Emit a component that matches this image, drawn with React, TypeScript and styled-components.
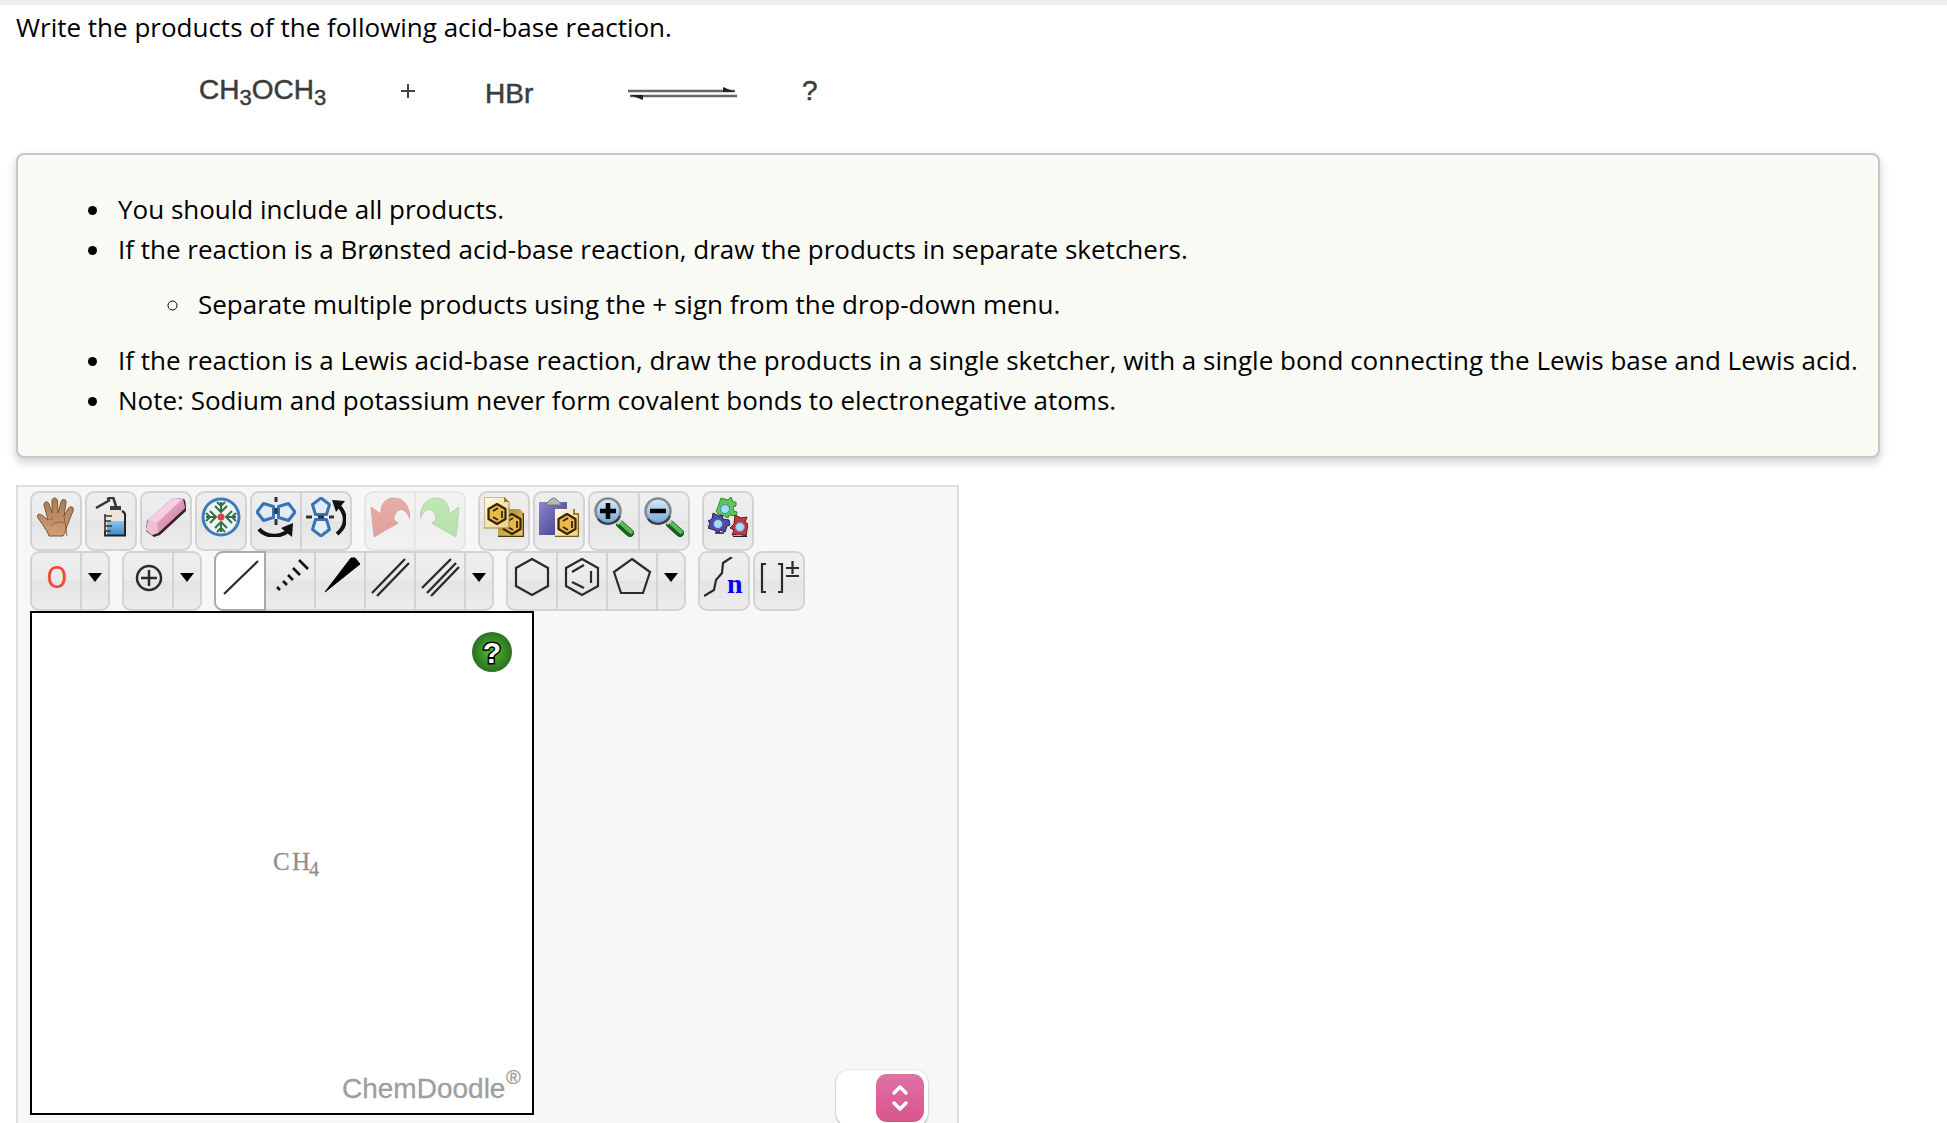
import React from "react";
import styled, { createGlobalStyle, css } from "styled-components";

const GlobalStyle = createGlobalStyle`
  body {
    margin: 0;
    background: #fff;
    color: #000;
    font-family: "Open Sans", "Noto Sans", sans-serif;
    font-size: 26px;
    line-height: 40px;
  }
`;

const Page = styled.main`
  border-top: 5px solid #efefef;
  padding: 2px 16px 16px;
`;

const Prompt = styled.p`
  margin: 0;
`;

const Scheme = styled.svg`
  display: block;
  margin: 13px 0 33px;
  font-family: "Liberation Sans", Arial, sans-serif;
`;

const Hints = styled.section`
  box-sizing: border-box;
  width: fit-content;
  padding: 34px 20px 36px 20px;
  border: 2px solid #c8c8c8;
  border-radius: 8px;
  background: #f9faf4;
  box-shadow: 0 4px 10px rgba(0, 0, 0, 0.2);
`;

const HintList = styled.ul<{ $nested?: boolean }>`
  margin: ${(p) => (p.$nested ? "15px 0 16px" : "0")};
  padding-left: 75px;
  list-style: ${(p) => (p.$nested ? "circle" : "disc")};
`;

const Hint = styled.li`
  padding-left: 5px;
`;

const Panel = styled.section`
  box-sizing: border-box;
  display: flex;
  align-items: flex-end;
  gap: 31px;
  width: fit-content;
  margin-top: 27px;
  padding: 4px 29px 12px 12px;
  border: 2px solid #dedede;
  background: #f7f7f7;
`;

const Sketcher = styled.div`
  padding-bottom: 11px;
`;

const Toolbar = styled.div`
  display: flex;
  gap: 12px;
`;

const Cluster = styled.div`
  display: flex;
  gap: 3px;
`;

const Group = styled.div<{ $disabled?: boolean }>`
  display: flex;
  gap: 2px;
  box-sizing: border-box;
  height: 60px;
  border: 2px solid #d3d3d3;
  border-radius: 9px;
  background: #d3d3d3;
  opacity: ${(p) => (p.$disabled ? 0.45 : 1)};
`;

const ToolButton = styled.button<{ $narrow?: boolean; $active?: boolean }>`
  display: flex;
  justify-content: center;
  box-sizing: border-box;
  width: ${(p) => (p.$narrow ? 26 : 48)}px;
  height: 56px;
  margin: 0;
  padding: 4px 0 12px;
  border: 0;
  background: linear-gradient(#eeeeee, #eaeaea 49%, #e4e4e4 51%, #ededed);
  &:first-child {
    border-top-left-radius: 7px;
    border-bottom-left-radius: 7px;
  }
  &:last-child {
    border-top-right-radius: 7px;
    border-bottom-right-radius: 7px;
  }
  ${(p) =>
    p.$active &&
    css`
      background: #fff;
      box-shadow: 0 0 0 2px #aaa;
    `}
`;

const CanvasFrame = styled.div`
  position: relative;
  box-sizing: border-box;
  width: 504px;
  height: 504px;
  border: 2px solid #000;
  background: #fff;
`;

const HelpButton = styled.button`
  position: absolute;
  top: 19px;
  right: 20px;
  display: flex;
  padding: 0;
  border: 0;
  background: none;
`;

const Picker = styled.label`
  position: relative;
  display: block;
`;

const PickerSelect = styled.select`
  display: block;
  appearance: none;
  width: 92px;
  height: 56px;
  padding: 0 52px 0 12px;
  border: 0;
  border-radius: 13px;
  background: #fff;
  box-shadow: 0 1px 2px rgba(0, 0, 0, 0.3), 0 0 2px rgba(0, 0, 0, 0.15);
  font: 26px "Open Sans", sans-serif;
`;

const PickerKnob = styled.span`
  position: absolute;
  top: 4px;
  right: 4px;
  width: 48px;
  height: 48px;
  border-radius: 11px;
  background: linear-gradient(#de72a5, #da548d);
  pointer-events: none;
`;

const ink = "#2b2b2b";

function Icon({ children, width = 40 }: { children: React.ReactNode; width?: number }) {
  return (
    <svg width={width} height={40} viewBox={`0 0 ${width} 40`} fill="none" aria-hidden="true">
      {children}
    </svg>
  );
}

function Penta({ x, y, turn = 0 }: { x: number; y: number; turn?: number }) {
  return (
    <path
      transform={`translate(${x} ${y}) rotate(${turn})`}
      d="M0-9 8.500-2.500 5.500 7.500H-5.500L-8.500-2.500Z"
      fill="#e4edf5"
      stroke="#3575b5"
      strokeWidth="3"
      strokeLinejoin="round"
    />
  );
}

function Benzene({ x, y }: { x: number; y: number }) {
  return (
    <g transform={`translate(${x} ${y})`} stroke="#33240a" strokeWidth="2.200" strokeLinejoin="round">
      <path d="M0-10 8.500-5V5L0 10-8.500 5V-5Z" fill="#e9b84d" />
      <path d="M-4-3 1-6M5-3V4M-4 3 1 6" strokeWidth="1.800" />
    </g>
  );
}

function Lens({ plus }: { plus?: boolean }) {
  return (
    <>
      <path d="M26 27 36 36" stroke="#14601a" strokeWidth="8" strokeLinecap="round" />
      <path d="M27 26 37 35" stroke="#5cb85a" strokeWidth="4" strokeLinecap="round" />
      <path d="M22 22 26 26" stroke="#cfcfcf" strokeWidth="6" />
      <circle cx="14" cy="14" r="12.500" fill="url(#lens)" stroke="#85888b" strokeWidth="2.500" />
      <path d="M4 22A13 13 0 0 0 26 19" stroke="#3a3c3f" strokeWidth="2" />
      <path d={plus ? "M6 14H22M14 6V22" : "M6 14H22"} stroke="#000" strokeWidth="4.500" />
    </>
  );
}

const undoShape =
  "M1 10 11 17C10 7 16 1 24 1C34 1 40 10 40 22C37 15 33 11 29 13C25 15 24 20 24 23L28 26 4 40Z";

const icons: Record<string, React.ReactNode> = {
  hand: (
    <>
      <path
        d="M13 39C12 35 9 32 7 28L2 21C0 17 4 16 7 19L12 23 8 8C8 4 12 4 13 7L16 16 16 4C16 0 21 0 21.500 4L22 16 25 5C26 1 31 2 30 6L28 19 32 12C34 8 39 10 37 14L31 29C30 33 29 36 27 39Z"
        fill="url(#skin)"
        stroke="#7a5535"
        strokeWidth="1"
        strokeLinejoin="round"
      />
      <path d="M15 29C18 25 24 24 28 26M14 23 17 21M28 19 31 39" stroke="#8c6240" strokeWidth="1" />
    </>
  ),
  bottle: (
    <>
      <path d="M5 11 19 3" stroke="#30343a" strokeWidth="2.500" />
      <path d="M16 2 22 0 25 9" stroke="#30343a" strokeWidth="2.500" />
      <path d="M19 9H30V14H19Z" fill="#34383c" />
      <path d="M14 39V19Q15 13 20 13H29Q34 15 34 19V39Z" fill="#efe5df" />
      <path d="M16 24H33V38H16Z" fill="url(#liquid)" />
      <path d="M31 14Q35 16 34 20V38.500H14V34" stroke="#222" strokeWidth="2" />
      <path d="M14 17V39M14 19H21M14 24H20M14 29H21M14 34H20" stroke="#333" strokeWidth="1.600" />
    </>
  ),
  eraser: (
    <>
      <path d="M27 1 38 2Q40 3 40 14L14 38 8 40 0 34 1 24Z" fill="#38202b" />
      <path d="M27 1 37 2 39 11 12 36 6 38 0 33 2 23Z" fill="#e6a3c4" />
      <path d="M27 1 36 2 11 26 2 23Z" fill="#f6cfe0" />
      <path d="M11 26 37 3 39 11 12 36Z" fill="url(#eraser)" />
      <path d="M2 23 11 26 12 36 6 38 0 33Z" fill="#f0bdd4" />
    </>
  ),
  center: (
    <>
      <circle cx="20" cy="20" r="18" fill="#eef2f0" stroke="#3b7cba" strokeWidth="3" />
      <g stroke="#2e7047" strokeWidth="2">
        <path d="M20 5V15M14 9 20 15 26 9M16 5 20 9 24 5" />
        <path d="M20 35V25M14 31 20 25 26 31M16 35 20 31 24 35" />
        <path d="M5 20H15M9 14 15 20 9 26M5 16 9 20 5 24" />
        <path d="M35 20H25M31 14 25 20 31 26M35 16 31 20 35 24" />
      </g>
      <circle cx="20" cy="20" r="3.500" fill="#dc4443" />
    </>
  ),
  flipH: (
    <>
      <Penta x={10} y={15} turn={-90} />
      <Penta x={30} y={15} turn={90} />
      <path d="M20 0V5M20 11V17M20 22V28" stroke="#333" strokeWidth="3" />
      <path d="M3 32C10 41 25 40 32 34" stroke="#111" strokeWidth="4" />
      <path d="M37 26 36 40 25 31Z" fill="#111" />
    </>
  ),
  flipV: (
    <>
      <Penta x={15} y={10} />
      <Penta x={15} y={30} turn={180} />
      <path d="M0 20H6M12 20H18M23 20H28" stroke="#333" strokeWidth="3" />
      <path d="M31 37C41 29 41 18 33 9" stroke="#111" strokeWidth="4" />
      <path d="M26 3 39 4 30 15Z" fill="#111" />
    </>
  ),
  undo: <path d={undoShape} fill="url(#undo)" stroke="#a33327" strokeWidth="0.800" />,
  redo: (
    <path
      d={undoShape}
      transform="translate(40 0) scale(-1 1)"
      fill="url(#redo)"
      stroke="#4b9a3c"
      strokeWidth="0.800"
    />
  ),
  copy: (
    <>
      <path d="M14 12H36L40 17V40H14Z" fill="url(#gold)" />
      <path d="M39.500 16V39.500H14" stroke="#4e3a08" strokeWidth="1.500" />
      <Benzene x={28} y={27} />
      <path d="M0 0H20L25 5V31H0Z" fill="url(#paper)" stroke="#a58a3d" />
      <path d="M20 0V5H25Z" fill="#a67f20" />
      <Benzene x={13} y={17} />
    </>
  ),
  paste: (
    <>
      <path d="M0 5H28V38H0Z" fill="url(#clip)" />
      <path d="M7 8H22Q20 4 18 3Q15-1 11 3Q9 4 7 8Z" fill="#b8b8b8" stroke="#777" />
      <path d="M16 12H35L40 17V40H16Z" fill="url(#paper)" />
      <path d="M35 12V17H39.500V39.500H16" stroke="#7b601a" strokeWidth="1.500" />
      <Benzene x={28} y={27} />
    </>
  ),
  zoomIn: <Lens plus />,
  zoomOut: <Lens />,
  pieces: (
    <>
      <path
        d="M13 1 20 3 23 0 25 5 28 5 28 9 25 10 26 14 29 15 28 19 21 18 20 21 16 19 10 17 8 14 10 10Z"
        fill="#62c455"
        stroke="#2f8a2c"
      />
      <path
        d="M5 16 11 19 14 18 15 22 21 23 22 28 19 29 17 35 12 33 11 36 6 33 0 31 2 26 0 24 4 22Z"
        fill="#5549a8"
        stroke="#29255f"
      />
      <path
        d="M27 18 33 21 39 20 37 25 40 27 38 39 31 37 24 38 26 33 22 31 26 27Z"
        fill="#c23a40"
        stroke="#65161a"
      />
      <path d="M7 36 16 36M25 39.500H39" stroke="#222" strokeWidth="1.500" />
      <circle cx="17" cy="12" r="4.500" fill="#a5dcf4" stroke="#3f87b6" />
      <circle cx="10" cy="27" r="4.500" fill="#a5dcf4" stroke="#3f6fb6" />
      <circle cx="32" cy="30" r="4.500" fill="#a5dcf4" stroke="#6f87b6" />
    </>
  ),
  oxygen: (
    <text x="21" y="31" textAnchor="middle" fontFamily="Roboto, sans-serif" fontSize="31" fill="#f5483c">
      O
    </text>
  ),
  charge: (
    <>
      <circle cx="21" cy="21" r="12" stroke={ink} strokeWidth="2.500" />
      <path d="M13 21H29M21 13V29" stroke={ink} strokeWidth="2.500" />
    </>
  ),
  single: <path d="M4 37 38 4" stroke={ink} strokeWidth="2.200" />,
  recessed: (
    <path
      d="M7 30 10 33M13 24 17 28M18 18 23 23M23 11 30 18M29 3 38 12"
      stroke="#111"
      strokeWidth="2.600"
    />
  ),
  wedge: <path d="M5 35 31 1 35 1 40 7Z" fill="#000" stroke="#000" strokeLinejoin="round" />,
  double: <path d="M2 36 35 2M7 39 39 6" stroke={ink} strokeWidth="2.400" />,
  triple: <path d="M2 31 31 2M7 36 36 6M11 39 39 10" stroke={ink} strokeWidth="2.400" />,
  hexagon: <path d="M20 2 36 11V29L20 38 4 29V11Z" stroke={ink} strokeWidth="2.200" />,
  benzene: (
    <path
      d="M20 2 36 11V29L20 38 4 29V11ZM10 15 22 8M29 14V26M10 25 22 31"
      stroke={ink}
      strokeWidth="2.200"
    />
  ),
  pentagon: <path d="M20 2 38 15 31 36H9L2 15Z" stroke={ink} strokeWidth="2.200" />,
  chain: (
    <>
      <path d="M0 39 10 33 12 23 18 16 19 6 28 0" stroke={ink} strokeWidth="2.200" />
      <text x="23" y="36" fontFamily="Liberation Serif, serif" fontWeight="700" fontSize="28" fill="#0505f5">
        n
      </text>
    </>
  ),
  brackets: (
    <path
      d="M7 7H3V35H7M19 7H23V35H19M27 11H40M33.500 4V17M27 19H40"
      stroke={ink}
      strokeWidth="2.200"
    />
  ),
};

function Defs() {
  const v = { x1: "0", y1: "0", x2: "0", y2: "1" };
  const d = { x1: "0", y1: "0", x2: "1", y2: "1" };
  const grads: [string, object, string, string][] = [
    ["skin", v, "#a97a52", "#cf9f74"],
    ["liquid", v, "#8fc4ea", "#3b8ccc"],
    ["eraser", d, "#eeb0cd", "#c97ba3"],
    ["undo", v, "#d5564a", "#c23c30"],
    ["redo", v, "#7fd468", "#6dc757"],
    ["gold", d, "#a9822a", "#eacb6a"],
    ["paper", d, "#fffbe6", "#ecd083"],
    ["clip", d, "#8a86cf", "#3e3a86"],
    ["lens", v, "#ddebf7", "#6ea6da"],
  ];
  return (
    <svg width="0" height="0" style={{ position: "absolute" }} aria-hidden="true">
      <defs>
        {grads.map(([id, dir, from, to]) => (
          <linearGradient key={id} id={id} {...dir}>
            <stop offset="0" stopColor={from} />
            <stop offset="1" stopColor={to} />
          </linearGradient>
        ))}
        <radialGradient id="help">
          <stop offset="0" stopColor="#4cc035" />
          <stop offset="1" stopColor="#2d6f22" />
        </radialGradient>
      </defs>
    </svg>
  );
}

type Tool = { icon: string; label: string; active?: boolean };
type ToolGroup = { tools: Tool[]; disabled?: boolean; menu?: string };

const topRow: ToolGroup[][] = [
  [
    { tools: [{ icon: "hand", label: "Move" }] },
    { tools: [{ icon: "bottle", label: "Clear" }] },
    { tools: [{ icon: "eraser", label: "Erase" }] },
    { tools: [{ icon: "center", label: "Center" }] },
    {
      tools: [
        { icon: "flipH", label: "Flip horizontally" },
        { icon: "flipV", label: "Flip vertically" },
      ],
    },
  ],
  [
    {
      disabled: true,
      tools: [
        { icon: "undo", label: "Undo" },
        { icon: "redo", label: "Redo" },
      ],
    },
  ],
  [
    { tools: [{ icon: "copy", label: "Copy" }] },
    { tools: [{ icon: "paste", label: "Paste" }] },
    {
      tools: [
        { icon: "zoomIn", label: "Zoom in" },
        { icon: "zoomOut", label: "Zoom out" },
      ],
    },
  ],
  [{ tools: [{ icon: "pieces", label: "Templates" }] }],
];

const bottomRow: ToolGroup[][] = [
  [{ tools: [{ icon: "oxygen", label: "Oxygen" }], menu: "More elements" }],
  [{ tools: [{ icon: "charge", label: "Increase charge" }], menu: "More attributes" }],
  [
    {
      menu: "More bonds",
      tools: [
        { icon: "single", label: "Single bond", active: true },
        { icon: "recessed", label: "Recessed bond" },
        { icon: "wedge", label: "Protruding bond" },
        { icon: "double", label: "Double bond" },
        { icon: "triple", label: "Triple bond" },
      ],
    },
  ],
  [
    {
      menu: "More rings",
      tools: [
        { icon: "hexagon", label: "Cyclohexane" },
        { icon: "benzene", label: "Benzene" },
        { icon: "pentagon", label: "Cyclopentane" },
      ],
    },
  ],
  [
    { tools: [{ icon: "chain", label: "Chain" }] },
    { tools: [{ icon: "brackets", label: "Brackets" }] },
  ],
];

function ToolRow({ clusters, label }: { clusters: ToolGroup[][]; label: string }) {
  return (
    <Toolbar role="toolbar" aria-label={label}>
      {clusters.map((cluster, i) => (
        <Cluster key={i}>
          {cluster.map((group, j) => (
            <Group key={j} $disabled={group.disabled}>
              {group.tools.map((t) => (
                <ToolButton
                  key={t.icon}
                  type="button"
                  aria-label={t.label}
                  disabled={group.disabled}
                  $active={t.active}
                >
                  <Icon>{icons[t.icon]}</Icon>
                </ToolButton>
              ))}
              {group.menu && (
                <ToolButton type="button" aria-label={group.menu} $narrow>
                  <Icon width={16}>
                    <path d="M1 16H15L8 25Z" fill="#000" />
                  </Icon>
                </ToolButton>
              )}
            </Group>
          ))}
        </Cluster>
      ))}
    </Toolbar>
  );
}

function ReactionScheme() {
  return (
    <Scheme width="840" height="60" viewBox="0 0 840 60" fill="#3c3c3c" fontSize="28">
      <g stroke="#3c3c3c" strokeWidth="0.500">
        <text x="183" y="39">
          CH
          <tspan dy="6" fontSize="22">3</tspan>
          <tspan dy="-6">OCH</tspan>
          <tspan dy="6" fontSize="22">3</tspan>
        </text>
        <text x="469" y="43">HBr</text>
        <text x="786" y="40">?</text>
      </g>
      <path d="M385 31H399M392 24V38" stroke="#444" strokeWidth="2" />
      <path d="M612 31H719M614 36H721" stroke="#666" strokeWidth="2.600" />
      <path d="M707 27 719 32H707ZM627 40 614 35H627Z" fill="#222" />
    </Scheme>
  );
}

function DrawingCanvas() {
  return (
    <CanvasFrame>
      <svg width="500" height="500" viewBox="0 0 500 500">
        <g fontFamily="Liberation Serif, serif" fill="#958b8b" stroke="#958b8b" strokeWidth="0.300">
          <text x="241" y="257" fontSize="25">C</text>
          <text x="260" y="257" fontSize="25">H</text>
          <text x="277" y="263" fontSize="20">4</text>
        </g>
        <g fontFamily="Liberation Sans, Arial, sans-serif" fill="#9e9e9e" stroke="#9e9e9e" strokeWidth="0.300">
          <text x="310" y="485" fontSize="28">ChemDoodle</text>
          <text x="474" y="471" fontSize="20">®</text>
        </g>
      </svg>
      <HelpButton type="button" aria-label="Help">
        <svg width="40" height="40" viewBox="0 0 40 40">
          <circle cx="20" cy="20" r="20" fill="url(#help)" />
          <text
            x="20"
            y="31"
            textAnchor="middle"
            fontFamily="Liberation Sans, Arial, sans-serif"
            fontWeight="700"
            fontSize="30"
            fill="#fff"
            stroke="#000"
            strokeWidth="3"
            paintOrder="stroke"
          >
            ?
          </text>
        </svg>
      </HelpButton>
    </CanvasFrame>
  );
}

export default function App() {
  return (
    <Page>
      <GlobalStyle />
      <Defs />
      <Prompt>Write the products of the following acid-base reaction.</Prompt>
      <ReactionScheme />
      <Hints>
        <HintList>
          <Hint>You should include all products.</Hint>
          <Hint>
            If the reaction is a Brønsted acid-base reaction, draw the products in separate sketchers.
            <HintList $nested>
              <Hint>Separate multiple products using the + sign from the drop-down menu.</Hint>
            </HintList>
          </Hint>
          <Hint>
            If the reaction is a Lewis acid-base reaction, draw the products in a single sketcher, with a
            single bond connecting the Lewis base and Lewis acid.
          </Hint>
          <Hint>Note: Sodium and potassium never form covalent bonds to electronegative atoms.</Hint>
        </HintList>
      </Hints>
      <Panel>
        <Sketcher>
          <ToolRow clusters={topRow} label="Editing tools" />
          <ToolRow clusters={bottomRow} label="Drawing tools" />
          <DrawingCanvas />
        </Sketcher>
        <Picker>
          <PickerSelect aria-label="Separator" defaultValue="">
            <option value=""></option>
            <option value="+">+</option>
          </PickerSelect>
          <PickerKnob>
            <svg width="48" height="48" viewBox="0 0 48 48" fill="none" aria-hidden="true">
              <path
                d="M18 19 24 13 30 19M18 29 24 35 30 29"
                stroke="#fff"
                strokeWidth="3.500"
                strokeLinecap="round"
                strokeLinejoin="round"
              />
            </svg>
          </PickerKnob>
        </Picker>
      </Panel>
    </Page>
  );
}
